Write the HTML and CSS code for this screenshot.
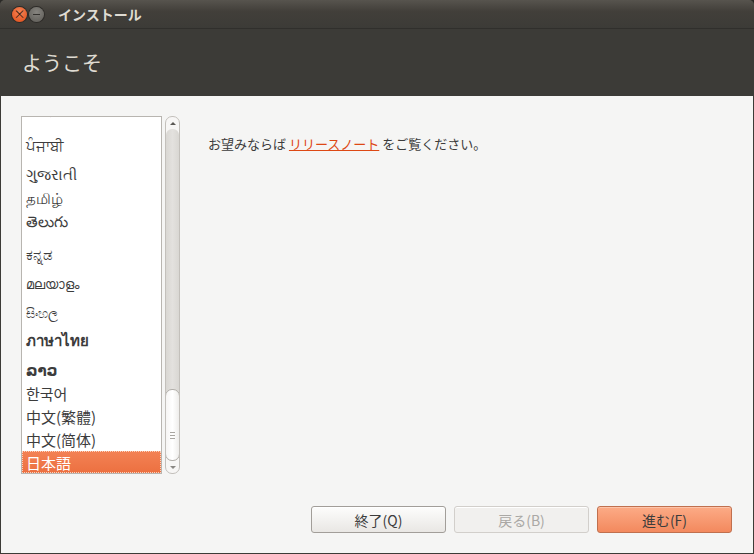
FILE: index.html
```html
<!DOCTYPE html>
<html lang="ja">
<head>
  <meta charset="UTF-8">
  <meta name="viewport" content="width=device-width, initial-scale=1.0">
  <title>インストール</title>
  <link rel="stylesheet" href="styles.css">
</head>
<body>
  <div class="window">

    <!-- Title bar -->
    <div class="titlebar">
      <span class="win-btn close">&times;</span>
      <span class="win-btn minimize"></span>
      <span class="title">インストール</span>
    </div>

    <!-- Step header -->
    <header class="banner">
      <h1>ようこそ</h1>
    </header>

    <main class="content">
      <div class="panes">
        <div class="lang-picker">
          <div class="lang-box">
            <ul class="lang-list">
              <li class="row ne">नेपाली</li>
              <li class="row pa">ਪੰਜਾਬੀ</li>
              <li class="row gu">ગુજરાતી</li>
              <li class="row ta">தமிழ்</li>
              <li class="row te">తెలుగు</li>
              <li class="row kn">ಕನ್ನಡ</li>
              <li class="row ml">മലയാളം</li>
              <li class="row si">සිංහල</li>
              <li class="row th">ภาษาไทย</li>
              <li class="row lo">ລາວ</li>
              <li class="row">한국어</li>
              <li class="row">中文(繁體)</li>
              <li class="row">中文(简体)</li>
              <li class="row selected">日本語</li>
            </ul>
          </div>
          <div class="scrollbar">
            <span class="arrow up"></span>
            <div class="trough">
              <div class="thumb"><span class="grip"></span></div>
            </div>
            <span class="arrow down"></span>
          </div>
        </div>

        <p class="notes">お望みならば <a href="#">リリースノート</a> をご覧ください。</p>
      </div>

      <div class="actions">
        <button class="btn">終了(Q)</button>
        <button class="btn" disabled>戻る(B)</button>
        <button class="btn primary">進む(F)</button>
      </div>
    </main>
  </div>
</body>
</html>
```

FILE: styles.css
```css
* {
  margin: 0;
  padding: 0;
  box-sizing: border-box;
}

body {
  font-family: "Noto Sans CJK JP", "Noto Sans", "DejaVu Sans", sans-serif;
  background-color: #2b2a27;
  color: #3c3c3c;
}

.window {
  width: 754px;
  height: 554px;
  display: flex;
  flex-direction: column;
  background-color: #3c3b37;
  border-radius: 5px 5px 0 0;
  overflow: hidden;
}

/* title bar */
.titlebar {
  height: 29px;
  display: flex;
  align-items: center;
  padding-left: 12px;
  background: linear-gradient(#57544e, #423f3a 40%, #3c3b37);
  border-bottom: 1px solid #302f2c;
}

.win-btn {
  width: 15px;
  height: 15px;
  border-radius: 50%;
  display: flex;
  justify-content: center;
  align-items: center;
  font-size: 12px;
  line-height: 1;
  color: #3a1a0c;
  margin-right: 2px;
}

.win-btn.close {
  background: radial-gradient(circle at 50% 35%, #f6865a, #df4a14);
  box-shadow: 0 0 0 1px #2d2b28;
}

.win-btn.minimize {
  background: radial-gradient(circle at 50% 35%, #86847f, #5c5a55);
  box-shadow: 0 0 0 1px #2d2b28;
}

.win-btn.minimize::after {
  content: '';
  width: 7px;
  height: 1px;
  background-color: #34322f;
}

.title {
  margin-left: 12px;
  font-size: 14px;
  font-weight: bold;
  color: #dfdbd2;
}

/* header */
.banner {
  height: 67px;
  display: flex;
  align-items: center;
  padding-left: 22px;
  background-color: #3c3b37;
}

.banner h1 {
  font-size: 20px;
  font-weight: normal;
  color: #dfdbd2;
}

/* main area */
.content {
  flex: 1;
  display: flex;
  flex-direction: column;
  justify-content: space-between;
  background-color: #f5f5f4;
  margin: 0 1px 1px 1px;
  padding: 20px 21px 20px 20px;
}

.panes {
  display: flex;
  gap: 28px;
}

.lang-picker {
  display: flex;
  gap: 3px;
}

.lang-box {
  width: 141px;
  height: 358px;
  background-color: #fff;
  border: 1px solid #b8b5b0;
  overflow: hidden;
}

/* list is scrolled to the bottom, so the first row is mostly hidden */
.lang-list {
  list-style: none;
  margin-top: -15px;
  font-size: 15px;
  color: #3c3c3c;
}

.row {
  height: 23px;
  display: flex;
  align-items: center;
  padding-left: 4px;
  white-space: nowrap;
}

/* per-script row heights */
.row.ne { height: 28px; align-items: flex-start; line-height: 1.2; }
.row.pa { height: 29px; }
.row.gu { height: 29px; }
.row.ta { height: 22px; align-items: flex-end; }
.row.te { height: 27px; align-items: flex-start; font-weight: normal; }
.row.kn { height: 32px; }
.row.ml { height: 29px; font-size: 13px; }
.row.si { height: 28px; font-size: 13px; }
.row.th { height: 30px; font-weight: 600; }
.row.lo { height: 26px; font-weight: bold; }

.row.selected {
  height: 22px;
  color: #fff;
  background: linear-gradient(#f38255, #ec7040);
  outline: 1px dotted #fbd2bf;
  outline-offset: -1px;
}

/* scrollbar */
.scrollbar {
  width: 15px;
  height: 358px;
  display: flex;
  flex-direction: column;
  border: 1px solid #c3c0bb;
  border-radius: 7px;
  background-color: #f7f6f5;
  overflow: hidden;
}

.arrow {
  height: 12px;
  flex-shrink: 0;
  display: flex;
  justify-content: center;
  align-items: center;
}

.arrow::before {
  content: '';
  border-left: 3px solid transparent;
  border-right: 3px solid transparent;
}

.arrow.up::before {
  border-bottom: 3px solid #5a5854;
}

.arrow.down::before {
  border-top: 3px solid #8a8884;
}

.trough {
  flex: 1;
  display: flex;
  flex-direction: column;
  justify-content: flex-end;
  background: linear-gradient(90deg, #d9d7d3, #e3e1de 50%, #d9d7d3);
  border-radius: 6px;
}

.thumb {
  height: 72px;
  display: flex;
  justify-content: center;
  align-items: center;
  background: linear-gradient(90deg, #f6f5f4, #fff 50%, #eeedeb);
  border: 1px solid #b1aea9;
  border-radius: 7px;
  margin: 0 -1px;
}

.grip {
  width: 5px;
  height: 7px;
  margin-top: 20px;
  border-top: 1px solid #a9a6a1;
  border-bottom: 1px solid #a9a6a1;
  position: relative;
}

.grip::after {
  content: '';
  position: absolute;
  left: 0;
  right: 0;
  top: 2px;
  height: 1px;
  background-color: #a9a6a1;
}

.notes {
  margin-top: 18px;
  font-size: 13px;
  color: #3c3c3c;
}

.notes a {
  color: #dd4814;
  text-decoration-color: #dd4814;
}

/* bottom buttons */
.actions {
  display: flex;
  justify-content: flex-end;
  gap: 8px;
}

.btn {
  width: 135px;
  height: 27px;
  font-family: inherit;
  font-size: 14px;
  color: #3c3c3c;
  background: linear-gradient(#fdfdfc, #e9e7e4);
  border: 1px solid #a29e99;
  border-radius: 3px;
  box-shadow: inset 0 1px 0 #fff;
}

.btn:disabled {
  color: #aaa8a5;
  background: #f1f0ee;
  border-color: #d2cfcb;
}

.btn.primary {
  background: linear-gradient(#fcab86, #f3895e);
  border-color: #c0704e;
  box-shadow: inset 0 1px 0 #fdc3a8;
}
```
